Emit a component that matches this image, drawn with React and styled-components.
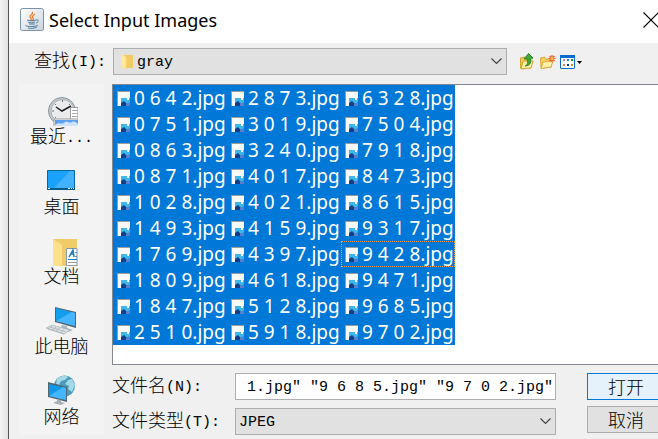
import { useState } from "react";
import styled, { createGlobalStyle } from "styled-components";

const GlobalStyle = createGlobalStyle`
  * {
    box-sizing: border-box;
  }

  body {
    margin: 0;
    overflow: hidden;
    background: #f0f0f0;
    color: #000;
    font-family: "Noto Sans CJK SC", "Noto Sans", sans-serif;
    font-size: 18px;
    font-weight: 300;
  }

  button, input, select {
    margin: 0;
    padding: 0;
    border: 0;
    border-radius: 0;
    color: inherit;
    font: inherit;
  }
`;

const Desktop = styled.div`
  min-height: 100vh;
  padding-left: 8px;
  overflow: hidden;
  background: linear-gradient(to right, #f4f4f4 0, #e2e2e2 8px);
`;

/* The right edge of the dialog runs off the screen */
const Dialog = styled.main`
  min-height: 100vh;
  margin-right: -18px;
  border-left: 1px solid #555;
  background: #f0f0f0;
`;

const TitleBar = styled.header`
  display: flex;
  align-items: center;
  height: 43px;
  padding: 0 17px 3px 11px;
  background: #fff;
`;

const Title = styled.h1`
  flex: 1;
  margin: 0 0 0 5px;
  font-family: "Noto Sans", sans-serif;
  font-size: 18px;
  font-weight: 400;
`;

const CloseBtn = styled.button`
  display: flex;
  background: none;
`;

const LookupRow = styled.div`
  display: flex;
  align-items: center;
  padding: 5px 0 9px 25px;
`;

const Label = styled.label`
  width: ${({ $width }) => $width}px;
  height: 27px;
  line-height: 23px;
  white-space: nowrap;
`;

const Mono = styled.span`
  font-family: "Liberation Mono", monospace;
  font-size: 15px;
  font-weight: 400;
  line-height: 1;
  vertical-align: 1px;
`;

const SelectBox = styled.div`
  display: flex;
  align-items: center;
  gap: ${({ $gap }) => $gap || 0}px;
  width: ${({ $width }) => $width}px;
  height: 27px;
  padding: 0 4px 0 ${({ $indent }) => $indent}px;
  border: 1px solid #adadb2;
  background: #e1e1e1;
`;

const Select = styled.select`
  flex: 1;
  height: 100%;
  margin-right: -12px;
  padding-top: 2px;
  appearance: none;
  background: none;
  font-family: "Liberation Mono", monospace;
  font-size: 15px;
  font-weight: 400;
`;

const Chevron = styled.svg`
  pointer-events: none;
`;

const Tools = styled.div`
  display: flex;
  gap: 4px;
  margin-left: 13px;
`;

const ToolBtn = styled.button`
  display: flex;
  background: none;
`;

const Body = styled.div`
  display: flex;
  gap: 8px;
  padding-left: 10px;
`;

const Sidebar = styled.nav`
  display: flex;
  flex-direction: column;
  gap: 16px;
  width: 85px;
  height: 351px;
  padding-top: 10px;
  background: #f3f3f3;
`;

const PlaceBtn = styled.button`
  display: flex;
  flex-direction: column;
  align-items: center;
  height: 54px;
  background: none;
  line-height: 18px;
`;

const Main = styled.section`
  flex: 1;
  min-width: 0;
`;

const FileList = styled.ul`
  display: grid;
  grid-template-rows: repeat(10, 26px);
  grid-auto-columns: 114px;
  grid-auto-flow: column;
  height: 281px;
  margin: 0;
  padding: 0;
  border: 1px solid #828790;
  background: #fff;
  list-style: none;
`;

const FileItem = styled.li`
  display: flex;
  align-items: center;
  gap: 4px;
  padding-left: 3px;
  border: 1px dotted ${({ $focused }) => ($focused ? "#ff9b32" : "#0078d7")};
  background: #0078d7;
  color: #fff;
  font-family: "Noto Sans", sans-serif;
  font-size: 19px;
  font-weight: 400;
  line-height: 24px;
  white-space: nowrap;

  svg {
    flex-shrink: 0;
  }
`;

const Footer = styled.div`
  display: flex;
  gap: 31px;
  padding-top: 8px;
`;

const Fields = styled.div`
  display: flex;
  flex-direction: column;
  gap: 8px;
`;

const Field = styled.div`
  display: flex;
`;

const NameInput = styled.input`
  width: 321px;
  height: 27px;
  padding: 2px 2px 0;
  border: 1px solid #adadb2;
  background: #fff;
  font-family: "Liberation Mono", monospace;
  font-size: 15px;
  font-weight: 400;
`;

const Actions = styled.div`
  display: flex;
  flex-direction: column;
  gap: 6px;
`;

const ActionBtn = styled.button`
  width: 78px;
  height: 27px;
  padding-bottom: 2px;
  border: 1px solid ${({ $primary }) => ($primary ? "#0078d7" : "#adadad")};
  background: ${({ $primary }) => ($primary ? "#e5f1fb" : "#e1e1e1")};
  line-height: 22px;
`;

const FILES = [
  "0 6 4 2", "0 7 5 1", "0 8 6 3", "0 8 7 1", "1 0 2 8",
  "1 4 9 3", "1 7 6 9", "1 8 0 9", "1 8 4 7", "2 5 1 0",
  "2 8 7 3", "3 0 1 9", "3 2 4 0", "4 0 1 7", "4 0 2 1",
  "4 1 5 9", "4 3 9 7", "4 6 1 8", "5 1 2 8", "5 9 1 8",
  "6 3 2 8", "7 5 0 4", "7 9 1 8", "8 4 7 3", "8 6 1 5",
  "9 3 1 7", "9 4 2 8", "9 4 7 1", "9 6 8 5", "9 7 0 2",
];

function JavaIcon() {
  return (
    <svg width="24" height="24" viewBox="0 0 24 24" fill="none">
      <defs>
        <linearGradient id="tile" x2="1" y2="1">
          <stop stopColor="#fff" />
          <stop offset="1" stopColor="#c9d3dc" />
        </linearGradient>
      </defs>
      <rect x="0.5" y="0.5" width="23" height="22" rx="2" fill="url(#tile)" stroke="#7b93a8" />
      <path d="M12 4c2 2-3 3-2 5 1 1 2 2 1 4M15 6c-3 2-3 3-2 4s0 2-1 3" stroke="#ed7d31" strokeWidth="1.3" />
      <path d="M7 12c2 1 7 1 9 0M8 14c2 1 5 1 7 0M9 16h6M16 12c3-1 3 2 0 3M6 17c-2 2 11 2 12 0M8 20c3 1 7 0 9-1" stroke="#527d9d" strokeWidth="1" />
    </svg>
  );
}

function FolderIcon() {
  return (
    <svg width="12" height="15" viewBox="0 0 12 15">
      <path d="M1 1h11v13H1z" fill="#f3cb64" />
      <path d="M0 0l5 3v12l-5-2z" fill="#ffe79b" />
      <path d="M5 3v12" stroke="#fbd97c" />
    </svg>
  );
}

function ChevronIcon() {
  return (
    <Chevron width="11" height="7" viewBox="0 0 11 7" fill="none">
      <path d="M0.5 0.5l5 5 5-5" stroke="#444" strokeWidth="1.2" />
    </Chevron>
  );
}

function UpIcon() {
  return (
    <svg width="16" height="17" viewBox="0 0 16 17">
      <path d="M0.500 5l4-1 1 1h5v10h-10z" fill="#f2cc58" stroke="#d3a32c" />
      <path d="M3 8h10l-2 7-10 1z" fill="#fff0a6" stroke="#d3a32c" />
      <path d="M5 13c3-1 3-4 2-7H4l4.500-5.500L13 5l-2.500 1c1 4-1 7-5.500 7z" fill="#3fa936" stroke="#1d7a20" strokeWidth="0.8" />
    </svg>
  );
}

function NewFolderIcon() {
  return (
    <svg width="16" height="17" viewBox="0 0 16 17">
      <path d="M0.500 5l4-1 1 2h6v8L1 15.500z" fill="#f4cf62" stroke="#d9a83a" />
      <path d="M3 9l10-1-2 6-10 1.500z" fill="#fff0aa" stroke="#dcae42" />
      <path d="M12 2v7M8.500 5.500h7M9.500 3l5 5M14.500 3l-5 5" stroke="#f4512c" strokeWidth="1.2" />
      <circle cx="12" cy="5.500" r="1.5" fill="#ffd04c" />
    </svg>
  );
}

function ViewIcon() {
  return (
    <svg width="23" height="17" viewBox="0 0 23 17">
      <rect x="0.5" y="2.5" width="14" height="13" rx="0.5" fill="#fff" stroke="#0869ce" />
      <path d="M0 2h15v3H0z" fill="#0869ce" />
      <path d="M3 6h2v2H3z" fill="#b18cae" />
      <path d="M7 6h2v2H7z" fill="#2878d0" />
      <path d="M11 6h2v2h-2z" fill="#16921e" />
      <path d="M3 11h2v2H3z" fill="#ed8057" />
      <path d="M7 11h2v2H7z" fill="#073986" />
      <path d="M11 11h2v2h-2z" fill="#c59a12" />
      <path d="M17 8h5l-2.500 3z" fill="#000" />
    </svg>
  );
}

function ImageFileIcon() {
  return (
    <svg width="13" height="15" viewBox="0 0 13 15">
      <path d="M0 0h13v15H0z" fill="#fafafa" />
      <path d="M0 15V0h13v1H1v14z" fill="#9b9b9b" />
      <path d="M4 7h9v8H4z" fill="#3db8ea" />
      <path d="M4 12l3-2 3 3 3-1v3H4z" fill="#123f88" />
      <path d="M9 13l4-2v4H9z" fill="#5b7fce" />
      <path d="M10 7h2v2h-2z" fill="#fff" />
    </svg>
  );
}

function RecentIcon() {
  return (
    <svg width="32" height="32" viewBox="0 0 32 32">
      <circle cx="16" cy="17" r="13.5" fill="#c3cbd0" stroke="#8b989f" />
      <circle cx="16.500" cy="17" r="11.500" fill="#e9ebec" stroke="#a6afb4" />
      <path d="M16.5 6v2M6 17h2M9 10l1 1M24 10l-1 1M9 24l1-1" stroke="#777" />
      <path d="M10 13l6 4 9-5" fill="none" stroke="#222" strokeWidth="1.500" />
      <path d="M24.500 13.500H32V26h-7.500z" fill="#fff" stroke="#999" />
      <path d="M26 16.500h6M26 19.500h6M26 22.500h6" stroke="#aaa" />
      <path d="M8 25h24v7H8z" fill="#fff" />
      <path d="M8 32v-7h24" fill="none" stroke="#999" />
      <path d="M9 26h23v6H9z" fill="#5da0f3" />
      <path d="M9 31c4-4 6 0 9-2 3-3 5 1 8-1 2-1 4 0 6 2v2H9z" fill="#cee3fb" />
    </svg>
  );
}

function DesktopIcon() {
  return (
    <svg width="32" height="32" viewBox="0 0 32 32">
      <path d="M1.500 6.500h27v19h-27z" fill="#1aa1fb" stroke="#08679f" />
      <path d="M28 7v17H8L24 7z" fill="#42b2ff" />
      <path d="M1 24h28v2H1z" fill="#075b91" />
      <path d="M2 24.500h2M22 24.500h2M25 24.500h1M27 24.500h1" stroke="#fff" />
    </svg>
  );
}

function DocumentsIcon() {
  return (
    <svg width="32" height="32" viewBox="0 0 32 32">
      <path d="M7 5h24v27H7z" fill="#efcb69" />
      <path d="M7 5l9 6v21H7z" fill="#ffe08a" />
      <path d="M20.500 14.500H31V32H20.500z" fill="#fff" stroke="#8998a3" />
      <path d="M23 23l4-7 1 7M24 20h4M30 18v1M30 22v1" fill="none" stroke="#197fc3" strokeWidth="1.5" />
      <path d="M22 25.500h9" stroke="#197fc3" />
      <path d="M22 28.500h9M22 31.500h9" stroke="#999" />
    </svg>
  );
}

function ComputerIcon() {
  return (
    <svg width="32" height="32" viewBox="0 0 32 32">
      <path d="M9 3l21 5v16L9 18z" fill="#53636d" />
      <path d="M10 4l19 5v13l-19-5z" fill="#129eed" />
      <path d="M10 17L26 8l3 1v13z" fill="#47b4ff" />
      <path d="M16 21l5 1v2l6 2-5 2-8-3z" fill="#aeb8be" />
      <path d="M0 24l6-3 18 5-6 4z" fill="#dce1e4" stroke="#9ca7ae" strokeWidth="0.6" />
      <path d="M4 23l16 5M2 25l16 5M6 22l-4 3M10 23l-4 3M14 24l-4 3M18 26l-4 3" stroke="#a8b1b6" strokeWidth="0.7" />
    </svg>
  );
}

function NetworkIcon() {
  return (
    <svg width="32" height="32" viewBox="0 0 32 32">
      <circle cx="18.500" cy="12" r="10.500" fill="#4a9abd" />
      <path d="M11 5c4-4 9-4 11-2l-3 3-4 1-2 4-3-1zM22 6l4-1 3 6-3 7-4-3 1-3-4-2z" fill="#a5d9e5" />
      <path d="M2 8l19 5v15L2 23z" fill="#4f6672" />
      <path d="M3 10l17 4v12L3 22z" fill="#0d99e8" />
      <path d="M3 22l14-9 3 1v12z" fill="#44b5ff" />
      <path d="M11 25l4 1v2l4 1-4 2-8-2 4-2z" fill="#a5b0b7" />
    </svg>
  );
}

const PLACES = [
  { name: "最近", dots: "...", Icon: RecentIcon },
  { name: "桌面", Icon: DesktopIcon },
  { name: "文档", Icon: DocumentsIcon },
  { name: "此电脑", Icon: ComputerIcon },
  { name: "网络", Icon: NetworkIcon },
];

function App() {
  const [focused, setFocused] = useState("9 4 2 8");
  const [fileName, setFileName] = useState(' 1.jpg" "9 6 8 5.jpg" "9 7 0 2.jpg"');

  return (
    <>
      <GlobalStyle />
      <Desktop>
        <Dialog>
          <TitleBar>
            <JavaIcon />
            <Title>Select Input Images</Title>
            <CloseBtn type="button" aria-label="Close">
              <svg width="16" height="16" viewBox="0 0 16 16">
                <path d="M0.500 0.500l15 15M15.500 0.500l-15 15" stroke="#000" strokeWidth="1.1" />
              </svg>
            </CloseBtn>
          </TitleBar>

          <LookupRow>
            <Label htmlFor="folder" $width={79}>查找<Mono>(I):</Mono></Label>
            <SelectBox $width={394} $indent={7} $gap={4}>
              <FolderIcon />
              <Select id="folder">
                <option>gray</option>
              </Select>
              <ChevronIcon />
            </SelectBox>
            <Tools>
              <ToolBtn type="button" aria-label="Up one level"><UpIcon /></ToolBtn>
              <ToolBtn type="button" aria-label="New folder"><NewFolderIcon /></ToolBtn>
              <ToolBtn type="button" aria-label="View menu"><ViewIcon /></ToolBtn>
            </Tools>
          </LookupRow>

          <Body>
            <Sidebar>
              {PLACES.map(({ name, dots, Icon }) => (
                <PlaceBtn type="button" key={name}>
                  <Icon />
                  <span>{name}{dots && <Mono>{dots}</Mono>}</span>
                </PlaceBtn>
              ))}
            </Sidebar>

            <Main>
              <FileList role="listbox" aria-label="Files" aria-multiselectable="true">
                {FILES.map((file) => (
                  <FileItem
                    key={file}
                    role="option"
                    aria-selected="true"
                    $focused={file === focused}
                    onClick={() => setFocused(file)}
                  >
                    <ImageFileIcon />
                    {file}.jpg
                  </FileItem>
                ))}
              </FileList>

              <Footer>
                <Fields>
                  <Field>
                    <Label htmlFor="name" $width={123}>文件名<Mono>(N):</Mono></Label>
                    <NameInput id="name" value={fileName} onChange={(e) => setFileName(e.target.value)} />
                  </Field>
                  <Field>
                    <Label htmlFor="type" $width={123}>文件类型<Mono>(T):</Mono></Label>
                    <SelectBox $width={321} $indent={3}>
                      <Select id="type">
                        <option>JPEG</option>
                      </Select>
                      <ChevronIcon />
                    </SelectBox>
                  </Field>
                </Fields>
                <Actions>
                  <ActionBtn type="button" $primary>打开</ActionBtn>
                  <ActionBtn type="button">取消</ActionBtn>
                </Actions>
              </Footer>
            </Main>
          </Body>
        </Dialog>
      </Desktop>
    </>
  );
}

export default App;
